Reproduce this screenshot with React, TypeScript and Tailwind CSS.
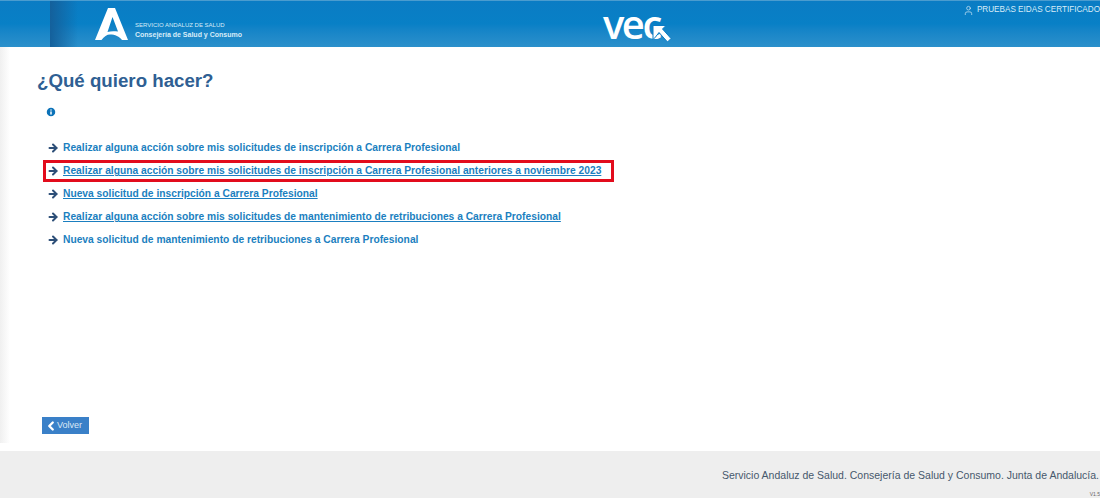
import { ArrowRight, ChevronLeft, Info, User } from "lucide-react"

const links = [
  { text: "Realizar alguna acción sobre mis solicitudes de inscripción a Carrera Profesional", marked: false, underline: false },
  { text: "Realizar alguna acción sobre mis solicitudes de inscripción a Carrera Profesional anteriores a noviembre 2023", marked: true, underline: true },
  { text: "Nueva solicitud de inscripción a Carrera Profesional", marked: false, underline: true },
  { text: "Realizar alguna acción sobre mis solicitudes de mantenimiento de retribuciones a Carrera Profesional", marked: false, underline: true },
  { text: "Nueva solicitud de mantenimiento de retribuciones a Carrera Profesional", marked: false, underline: false },
]

function JuntaLogo() {
  return (
    <svg width="34" height="34" viewBox="0 0 34 34" className="shrink-0">
      <path
        fill="#fff"
        fillRule="evenodd"
        d="M13 1H20L33 33H27C24.500 29.500 20 27.500 15 27.500 12 27.500 9 29.500 6.500 33H0Z M17.500 10 12.500 25C15.500 24 19 24 23 24.500Z"
      />
    </svg>
  )
}

function VecLogo() {
  return (
    <div className="relative h-[46px] w-[70px]">
      <span className="absolute left-0 top-[3px] pr-[4px] font-['Open_Sans',sans-serif] text-[40px] leading-[40px] font-semibold tracking-[-2.500px] text-white">vec</span>
      <svg width="20" height="20" viewBox="0 0 20 20" className="absolute left-[49px] top-[23px]">
        <path fill="#fff" stroke="#0b7cc5" strokeWidth="1" d="M1 1.500h13l-3.500 3.500L19 14.500 15.500 18 7 8.500 3.500 13 1 15.500z" />
      </svg>
    </div>
  )
}

export default function App() {
  return (
    <div className="flex h-[500px] w-[1100px] flex-col overflow-hidden bg-white font-['Liberation_Sans',Arial,sans-serif]">
      {/* cabecera */}
      <header className="relative flex h-[47px] shrink-0 border-t border-[#4a9ccf] bg-gradient-to-b from-[#0a7cc4] via-[#0880c6] to-[#2b90cb]">
        <div className="h-full w-[50px] shrink-0" />
        <div className="h-full w-[28px] shrink-0 bg-gradient-to-r from-[#14609b] to-[#14609b00]" />
        <div className="ml-[17px] flex h-full w-[508px] shrink-0 items-center">
          <JuntaLogo />
          <div className="ml-[6px] flex flex-col pt-[12px] text-[#d8ecf8]">
            <span className="text-[6px] leading-[10px]">SERVICIO ANDALUZ DE SALUD</span>
            <span className="text-[7px] leading-[10px] font-bold">Consejería de Salud y Consumo</span>
          </div>
        </div>
        <VecLogo />
        <div className="ml-auto flex h-[19px] items-center gap-[3px] whitespace-nowrap text-[8.170px] text-[#d8ecf8]">
          <User size={11} strokeWidth={1.500} />
          <span>PRUEBAS EIDAS CERTIFICADO</span>
        </div>
      </header>

      {/* contenido */}
      <main className="flex h-[396px] shrink-0">
        <div className="h-full w-[10px] shrink-0 bg-gradient-to-r from-[#f0f0f0] to-white" />
        <div className="flex min-w-0 flex-1 flex-col pl-[27px]">
          <h1 className="mt-[21px] text-[18.700px] leading-[26px] font-bold text-[#2f5f93]">¿Qué quiero hacer?</h1>
          <Info size={12} className="mt-[12px] ml-[8px] fill-[#0b72b8] text-white" strokeWidth={3} />
          <ul className="mt-[20px] flex flex-col gap-[3px]">
            {links.map(link => {
              return (
                <li
                  key={link.text}
                  className={
                    link.marked
                      ? "-my-[1px] ml-[6px] flex h-[22px] w-[571px] items-center border-[3px] border-[#e20c1c] pl-[1px]"
                      : "flex h-[20px] items-center pl-[10px]"
                  }
                >
                  <ArrowRight size={12} strokeWidth={4} className="shrink-0 text-[#2d4f78]" />
                  <a
                    href="#"
                    className={
                      link.underline
                        ? "ml-[4px] whitespace-nowrap text-[10.250px] font-bold text-[#1b7fc0] underline"
                        : "ml-[4px] whitespace-nowrap text-[10.250px] font-bold text-[#1b7fc0]"
                    }
                  >
                    {link.text}
                  </a>
                </li>
              )
            })}
          </ul>
          <button className="mt-auto mb-[9px] ml-[5px] flex h-[17px] w-[47px] items-center bg-[#3a80c8] pl-[2px] text-[9px] text-[#dce9f6]">
            <ChevronLeft size={14} strokeWidth={4} className="text-white" />
            <span className="-ml-[1px] pt-[1px]">Volver</span>
          </button>
        </div>
      </main>

      <div className="h-[8px] shrink-0" />

      {/* pie */}
      <footer className="relative flex h-[47px] shrink-0 justify-end bg-[#eeeeee] pt-[18px] pr-[1px]">
        <span className="text-[10.500px] leading-[13px] whitespace-nowrap text-[#46586c]">Servicio Andaluz de Salud. Consejería de Salud y Consumo. Junta de Andalucía.</span>
        <span className="absolute right-0 bottom-[1px] text-[5px] leading-[6px] text-[#666]">V1.5</span>
      </footer>
    </div>
  )
}
